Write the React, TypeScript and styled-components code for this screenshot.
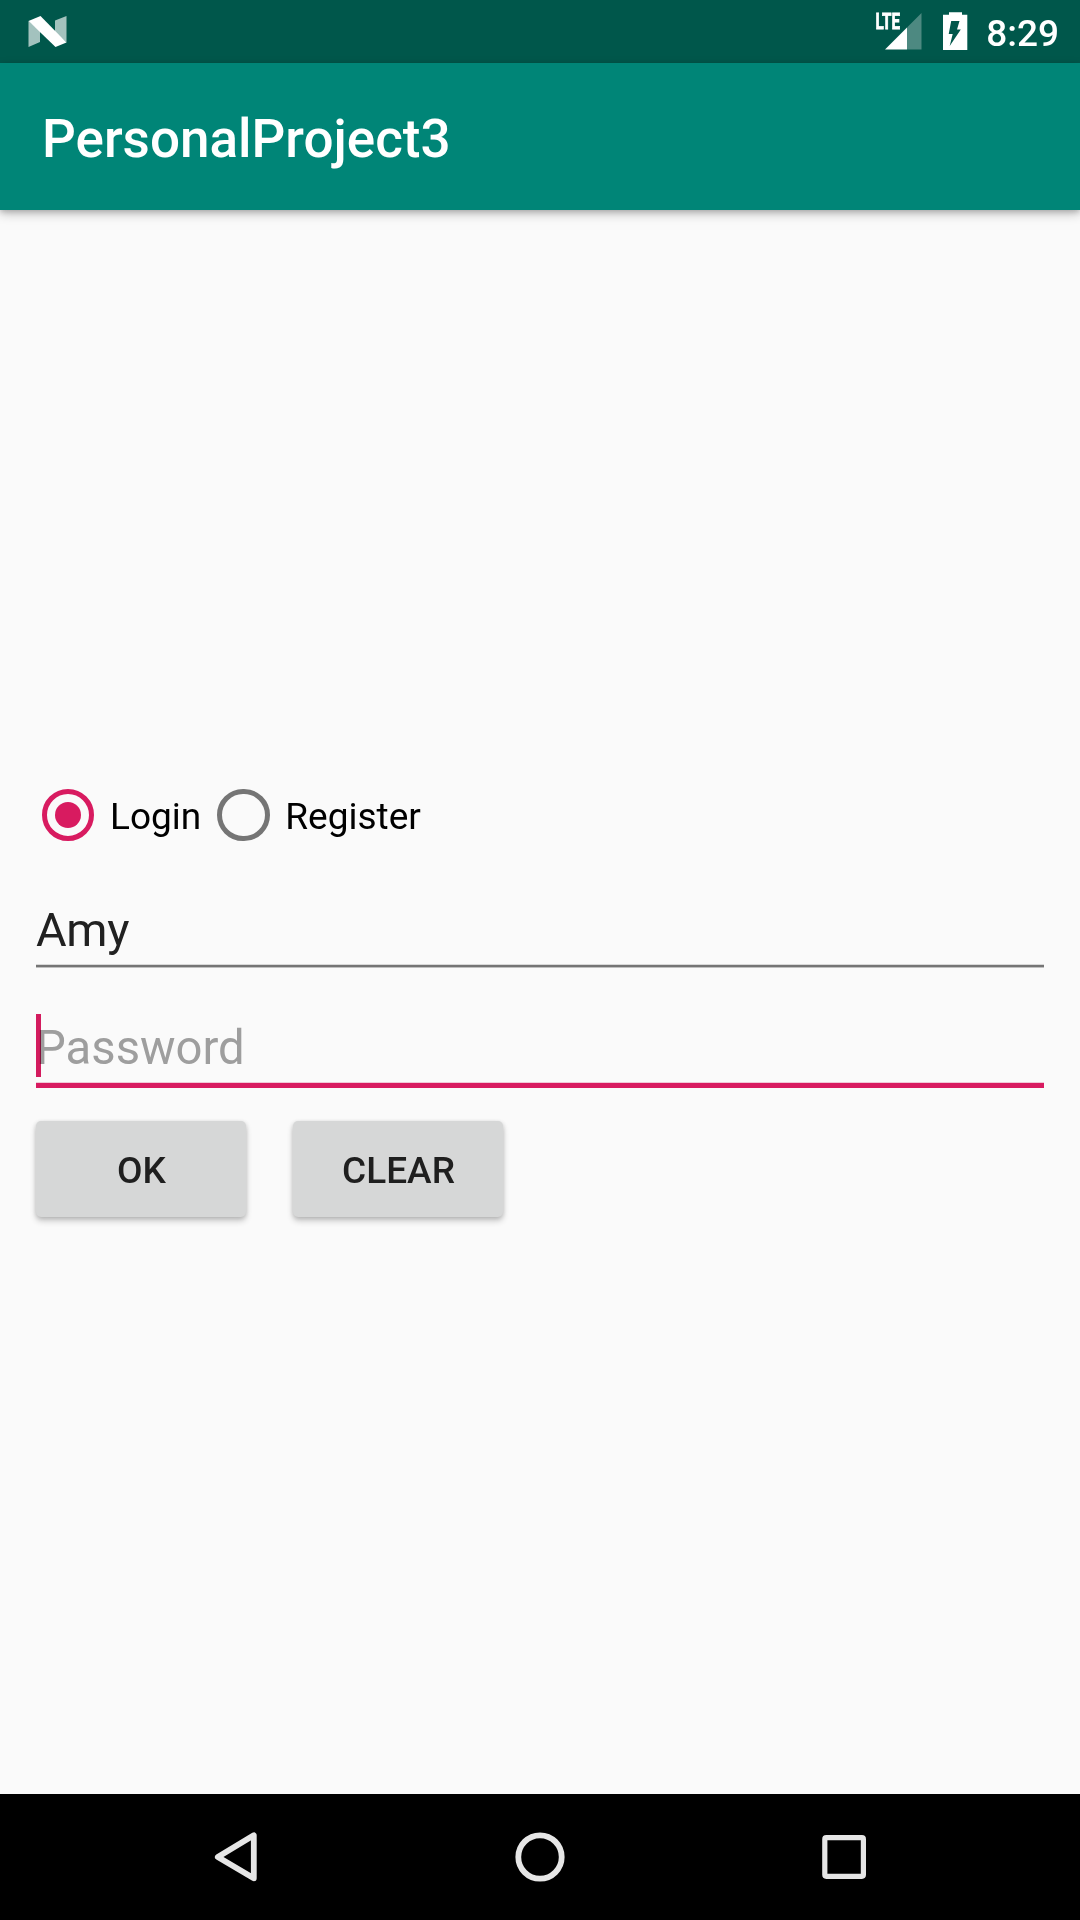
import React, { useState } from "react";
import styled, { createGlobalStyle } from "styled-components";

const GlobalStyle = createGlobalStyle`
  * { box-sizing: border-box; }
  body { margin: 0; background: #fafafa; }
`;

const Screen = styled.div`
  display: flex;
  flex-direction: column;
  width: 1080px;
  height: 1920px;
  background: #fafafa;
  font-family: Roboto, "Liberation Sans", sans-serif;
  overflow: hidden;
`;

const StatusBar = styled.header`
  display: flex;
  align-items: center;
  justify-content: space-between;
  flex: none;
  height: 63px;
  padding: 0 21px 0 28px;
  background: #00574b;
`;

const StatusIcons = styled.div`
  display: flex;
  align-items: center;
`;

const Icon = styled.svg<{ $gap?: number }>`
  display: block;
  flex: none;
  margin-right: ${(p) => p.$gap ?? 0}px;
`;

const Clock = styled.span`
  padding-top: 5px;
  font-size: 37px;
  line-height: 44px;
  font-weight: 500;
  color: #fff;
`;

const AppBar = styled.div`
  display: flex;
  align-items: center;
  flex: none;
  height: 147px;
  padding: 5px 42px 0;
  background: #008577;
  box-shadow: 0 4px 10px rgba(0, 0, 0, 0.22), 0 2px 5px rgba(0, 0, 0, 0.16);
`;

const Title = styled.h1`
  margin: 0;
  font-size: 53px;
  line-height: 62px;
  font-weight: 500;
  color: #fff;
`;

const Form = styled.form`
  display: flex;
  flex-direction: column;
  flex: 1;
  padding: 563px 36px 0;
`;

const RadioGroup = styled.div`
  display: flex;
  align-items: center;
  height: 84px;
  margin-left: -10px;
`;

const RadioOption = styled.label`
  display: flex;
  align-items: center;
  height: 84px;
`;

const RadioInput = styled.input`
  appearance: none;
  display: grid;
  place-items: center;
  width: 52.5px;
  height: 52.5px;
  margin: 0 15.75px;
  border: 5.25px solid #757575;
  border-radius: 50%;

  &:checked {
    border-color: #d81b60;
  }

  &:checked::after {
    content: "";
    width: 26.25px;
    height: 26.25px;
    border-radius: 50%;
    background: #d81b60;
  }
`;

const RadioText = styled.span`
  padding-top: 4px;
  font-size: 37px;
  line-height: 44px;
  color: #000;
`;

const Field = styled.div<{ $top: number }>`
  position: relative;
  display: flex;
  flex: none;
  align-items: center;
  height: 69px;
  margin-top: ${(p) => p.$top}px;
`;

const TextInput = styled.input`
  width: 100%;
  height: 56px;
  padding: 0;
  border: 0;
  outline: 0;
  background: transparent;
  font-family: inherit;
  font-size: 47px;
  letter-spacing: -0.3px;
  color: #212121;

  &::placeholder {
    font-size: 47.25px;
    letter-spacing: 0;
    color: #9e9e9e;
    opacity: 1;
  }
`;

const Underline = styled.div<{ $active?: boolean }>`
  flex: none;
  height: ${(p) => (p.$active ? 6 : 4)}px;
  background: ${(p) =>
    p.$active
      ? "linear-gradient(#f0c9d6 1px, #d81b60 1px)"
      : "linear-gradient(#d8d8d8 1px, #757575 1px, #757575 3px, #c0c0c0 3px)"};
`;

const Caret = styled.span`
  position: absolute;
  left: 0;
  top: 1px;
  width: 5px;
  height: 63px;
  background: #d81b60;
  mix-blend-mode: multiply;
`;

const Actions = styled.div`
  display: flex;
  gap: 47px;
  margin-top: 33px;
`;

const Button = styled.button`
  display: flex;
  align-items: center;
  justify-content: center;
  width: 210px;
  height: 96px;
  padding: 3px 0 0 1px;
  border: 0;
  border-radius: 5px;
  background: #d6d7d7;
  box-shadow: 0 4px 6px rgba(0, 0, 0, 0.2), 0 1px 4px rgba(0, 0, 0, 0.14);
  font-family: inherit;
  font-size: 37px;
  line-height: 44px;
  font-weight: 500;
  color: #1f1f1f;
`;

const NavBar = styled.nav`
  display: flex;
  align-items: center;
  flex: none;
  height: 126px;
  padding: 0 84px;
  background: #000;
`;

const NavKey = styled.div`
  display: flex;
  justify-content: center;
  flex: 1;
`;

export default function App() {
  const [mode, setMode] = useState("Login");
  const [name, setName] = useState("Amy");
  const [password, setPassword] = useState("");

  const clear = () => {
    setName("");
    setPassword("");
  };

  return (
    <Screen>
      <GlobalStyle />
      <StatusBar>
        <Icon width="40" height="63" viewBox="28 0 40 63">
          <path d="M28.5 21 40 31v11l-11.500 5zM55 20.500 66.500 16v26.500L55 32z" fill="#fff" fillOpacity=".64" />
          <path d="M28.500 21 40.500 16l26 26.500-11 4.500z" fill="#fff" />
        </Icon>
        <StatusIcons>
          <Icon width="50" height="63" viewBox="875 0 50 63" $gap={16}>
            <text x="875.5" y="29" textLength="24.5" lengthAdjust="spacingAndGlyphs" fontSize="22" fontWeight="700" fill="#fff" stroke="#fff" strokeWidth=".8">LTE</text>
            <path d="M885 49.500 907 27.500v22z" fill="#fff" />
            <path d="M907 27.500 921.500 13v36.500H907z" fill="#fff" fillOpacity=".3" />
          </Icon>
          <Icon width="28" height="63" viewBox="941 0 28 63" $gap={17}>
            <path fillRule="evenodd" fill="#fff" d="M949 12.200h13v2.600h5.300v35.200H943V14.800h6zM951.200 21h8.300l-2.500 8.500h3.800L949.700 46l3-12h-4z" />
          </Icon>
          <Clock>8:29</Clock>
        </StatusIcons>
      </StatusBar>
      <AppBar>
        <Title>PersonalProject3</Title>
      </AppBar>
      <Form onSubmit={(e) => e.preventDefault()}>
        <RadioGroup>
          {["Login", "Register"].map((option) => (
            <RadioOption key={option}>
              <RadioInput type="radio" name="mode" checked={mode === option} onChange={() => setMode(option)} />
              <RadioText>{option}</RadioText>
            </RadioOption>
          ))}
        </RadioGroup>
        <Field $top={38}>
          <TextInput aria-label="Name" value={name} onChange={(e) => setName(e.target.value)} />
        </Field>
        <Underline />
        <Field $top={45}>
          <TextInput type="password" placeholder="Password" value={password} onChange={(e) => setPassword(e.target.value)} />
          <Caret />
        </Field>
        <Underline $active />
        <Actions>
          <Button type="submit">OK</Button>
          <Button type="button" onClick={clear}>CLEAR</Button>
        </Actions>
      </Form>
      <NavBar>
        <NavKey>
          <Icon width="60" height="60" viewBox="206 1827 60 60">
            <path d="M253.800 1835.300v43L217.800 1857z" fill="none" stroke="#e6e6e6" strokeWidth="5.800" strokeLinejoin="round" />
          </Icon>
        </NavKey>
        <NavKey>
          <Icon width="60" height="60" viewBox="0 0 60 60">
            <circle cx="30" cy="30" r="21.700" fill="none" stroke="#e6e6e6" strokeWidth="5.800" />
          </Icon>
        </NavKey>
        <NavKey>
          <Icon width="60" height="60" viewBox="0 0 60 60">
            <rect x="10.800" y="10.700" width="38.600" height="38.600" rx="1.500" fill="none" stroke="#e6e6e6" strokeWidth="5.200" />
          </Icon>
        </NavKey>
      </NavBar>
    </Screen>
  );
}
